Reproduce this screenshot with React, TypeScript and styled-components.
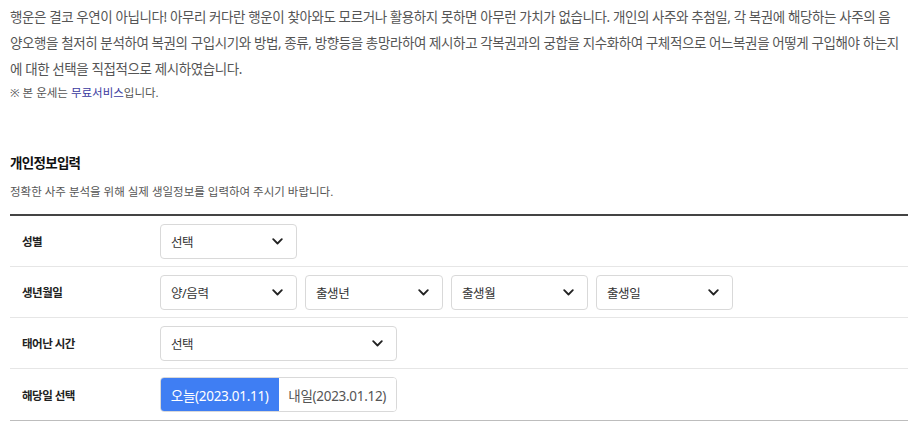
import React from "react";
import styled, { createGlobalStyle } from "styled-components";

const Global = createGlobalStyle`
  html, body { margin: 0; padding: 0; background: #fff; }
  body { font-family: "Noto Sans", "Noto Sans CJK KR", sans-serif; color: #333; }
  * { box-sizing: border-box; }
`;

const Page = styled.div`
  width: 915px;
  padding: 4px 7px 0 10px;
`;

const Intro = styled.div`
  font-size: 13.5px;
  letter-spacing: -0.4px;
  line-height: 26px;
  color: #555;
`;

const IntroLine = styled.div`
  white-space: nowrap;
`;

const Note = styled.div`
  margin-top: 2px;
  font-size: 11.5px;
  letter-spacing: 0;
  line-height: 18px;
  color: #555;
`;

const Link = styled.span`
  color: #3b3ba0;
`;

const Heading = styled.h2`
  margin: 51px 0 0;
  font-size: 13.5px;
  letter-spacing: -0.7px;
  font-weight: 700;
  line-height: 20px;
  color: #111;
`;

const Sub = styled.p`
  margin: 11px 0 0;
  font-size: 11.5px;
  letter-spacing: 0;
  line-height: 16px;
  color: #555;
`;

const Form = styled.div`
  margin-top: 14px;
  border-top: 2px solid #444;
  border-bottom: 1px solid #bdbdbd;
  width: 898px;
`;

const Row = styled.div<{ $last?: boolean }>`
  display: flex;
  align-items: center;
  height: 51px;
  border-bottom: ${(p) => (p.$last ? "none" : "1px solid #e6e6e6")};
`;

const Label = styled.div`
  width: 150px;
  padding-left: 12px;
  font-size: 11.5px;
  font-weight: 700;
  letter-spacing: -0.5px;
  color: #222;
`;

const Fields = styled.div`
  display: flex;
  gap: 8px;
`;

const SelectBox = styled.div<{ $w: number }>`
  width: ${(p) => p.$w}px;
  height: 35px;
  border: 1px solid #d9d9d9;
  border-radius: 4px;
  display: flex;
  align-items: center;
  justify-content: space-between;
  padding: 0 13px 0 10px;
  font-size: 12.5px;
  letter-spacing: -0.4px;
  color: #333;
  background: #fff;
`;

const Chevron = () => (
  <svg width="11" height="7" viewBox="0 0 11 7" fill="none">
    <path d="M1.2 1.2 L5.5 5.5 L9.8 1.2" stroke="#222" strokeWidth="1.8" strokeLinecap="round" strokeLinejoin="round" />
  </svg>
);

const Select = ({ text, w }: { text: string; w: number }) => (
  <SelectBox $w={w}>
    <span>{text}</span>
    <Chevron />
  </SelectBox>
);

const Toggle = styled.div`
  display: flex;
  width: 237px;
  height: 35px;
  border: 1px solid #d9d9d9;
  border-radius: 4px;
  overflow: hidden;
`;

const ToggleBtn = styled.div<{ $active?: boolean }>`
  flex: 1;
  display: flex;
  align-items: center;
  justify-content: center;
  font-size: 13.5px;
  letter-spacing: -0.3px;
  background: ${(p) => (p.$active ? "#3f7ef3" : "#fff")};
  color: ${(p) => (p.$active ? "#fff" : "#555")};
`;

export default function App() {
  return (
    <>
      <Global />
      <Page>
        <Intro>
          <IntroLine>
            행운은 결코 우연이 아닙니다! 아무리 커다란 행운이 찾아와도 모르거나 활용하지 못하면 아무런 가치가 없습니다. 개인의 사주와 추첨일, 각 복권에 해당하는 사주의 음
          </IntroLine>
          <IntroLine>
            양오행을 철저히 분석하여 복권의 구입시기와 방법, 종류, 방향등을 총망라하여 제시하고 각복권과의 궁합을 지수화하여 구체적으로 어느복권을 어떻게 구입해야 하는지
          </IntroLine>
          <IntroLine>에 대한 선택을 직접적으로 제시하였습니다.</IntroLine>
        </Intro>
        <Note>
          ※ 본 운세는 <Link>무료서비스</Link>입니다.
        </Note>
        <Heading>개인정보입력</Heading>
        <Sub>정확한 사주 분석을 위해 실제 생일정보를 입력하여 주시기 바랍니다.</Sub>
        <Form>
          <Row>
            <Label>성별</Label>
            <Fields>
              <Select text="선택" w={137} />
            </Fields>
          </Row>
          <Row>
            <Label>생년월일</Label>
            <Fields>
              <Select text="양/음력" w={137} />
              <Select text="출생년" w={138} />
              <Select text="출생월" w={137} />
              <Select text="출생일" w={137} />
            </Fields>
          </Row>
          <Row>
            <Label>태어난 시간</Label>
            <Fields>
              <Select text="선택" w={237} />
            </Fields>
          </Row>
          <Row $last>
            <Label>해당일 선택</Label>
            <Toggle>
              <ToggleBtn $active>오늘(2023.01.11)</ToggleBtn>
              <ToggleBtn>내일(2023.01.12)</ToggleBtn>
            </Toggle>
          </Row>
        </Form>
      </Page>
    </>
  );
}
